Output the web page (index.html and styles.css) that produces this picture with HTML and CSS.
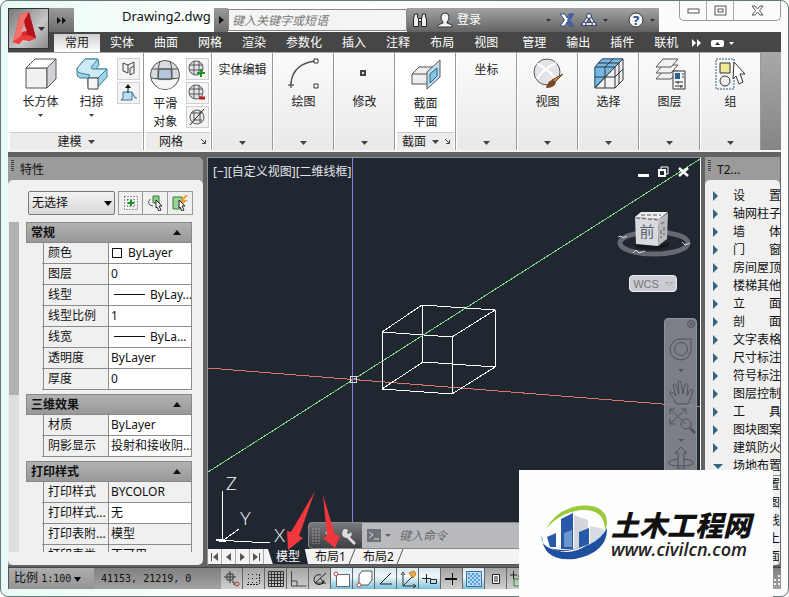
FILE: index.html
```html
<!DOCTYPE html>
<html lang="zh-CN">
    <head>
        <meta charset="utf-8">
        <title>Drawing2.dwg</title>
        <link rel="stylesheet" href="styles.css">
    </head>
    <body>
        <div id="window">
            <header id="header">
                <button class="app-button" aria-label="应用程序菜单">
                    <svg width="39" height="39" viewBox="0 0 39 39">
                        <path d="M4 33 L11 5 L20 3 L27 29 L20 32 L18 27 L12 28 L10 35 Z" fill="#d5282c"/>
                        <path d="M11 5 L20 3 L16 14 L10 35 L4 33 Z" fill="#f0706c"/>
                        <path d="M20 3 L27 29 L20 32 L15 12 Z" fill="#b3141b"/>
                        <path d="M15 15 L18 22 L12 23 Z" fill="#d9a9a9"/>
                        <path d="M4 33 L12 27 L19 26 L27 29 L20 32 L14 31 L10 35 Z" fill="#ee3b3c"/>
                        <path d="M29 18h7l-3.500 4z" fill="#333"/>
                    </svg>
                </button>
                <div class="titlebar">
                    <button class="quick-more" aria-label="快速访问">
                        <svg width="9" height="7"><path d="M0 0l4 3.500-4 3.500zM5 0l4 3.500-4 3.500z" fill="#111"/></svg>
                    </button>
                    <h1>Drawing2.dwg</h1>
                    <button class="search-toggle" aria-label="展开搜索">
                        <svg width="5" height="8"><path d="M0 0l5 4-5 4z" fill="#111"/></svg>
                    </button>
                    <input class="search" type="text" placeholder="键入关键字或短语" aria-label="搜索">
                    <div class="info-center">
                        <button aria-label="查找">
                            <svg width="16" height="16" viewBox="0 0 16 16" fill="#eee" stroke="#222">
                                <path d="M2.500 2h3v3l1 2v7.500h-5V7z"/><path d="M10.500 2h3v3l1 2v7.500h-5V7z"/><path d="M6.500 6.500h3v3h-3z"/>
                            </svg>
                        </button>
                        <button class="login">
                            <svg width="16" height="16" viewBox="0 0 16 16" fill="#f4f4f4" stroke="#333">
                                <path d="M8 1q4 0 4 4 0 3-2 5v1l5 2v2H1v-2l5-2v-1Q4 8 4 5q0-4 4-4z"/>
                            </svg>
                            登录
                        </button>
                        <span class="spacer"></span>
                        <svg class="drop" width="5" height="3"><path d="M0 0h5l-2.500 3z" fill="#333"/></svg>
                        <button class="exchange" aria-label="Exchange">
                            <svg width="16" height="14" viewBox="0 0 16 14">
                                <path d="M1 1h5l2 4 2-4h5l-4.500 6 4.500 6h-5l-2-4-2 4H1l4.500-6z" fill="#fff" stroke="#2f4a82"/>
                                <path d="M10 1h5l-4.500 6 4.500 6h-5L8 8z" fill="#3f64ac"/>
                            </svg>
                        </button>
                        <button aria-label="保持连接">
                            <svg width="16" height="14" viewBox="0 0 16 14" fill="none">
                                <path d="M8 3L3 11h10z" stroke="#29375a" stroke-width="3.500"/>
                                <path d="M8 3L3 11h10z" stroke="#dce3ef" stroke-width="2"/>
                                <circle cx="8" cy="3" r="2.500" fill="#eef" stroke="#29375a"/><circle cx="3" cy="11" r="2" fill="#eef" stroke="#29375a"/><circle cx="13" cy="11" r="2" fill="#eef" stroke="#29375a"/>
                            </svg>
                        </button>
                        <svg class="drop" width="5" height="3"><path d="M0 0h5l-2.500 3z" fill="#333"/></svg>
                        <button class="help" aria-label="帮助">
                            <svg width="16" height="16"><circle cx="8" cy="8" r="7" fill="#f2f5fa" stroke="#333"/><text x="8" y="13" text-anchor="middle" font-size="13" font-weight="bold" fill="#26457e">?</text></svg>
                        </button>
                        <svg class="drop" width="5" height="3"><path d="M0 0h5l-2.500 3z" fill="#333"/></svg>
                    </div>
                    <div class="window-buttons">
                        <button aria-label="最小化"><svg width="13" height="6"><rect x="1" y="1" width="11" height="4" fill="#fff" stroke="#555"/></svg></button>
                        <button aria-label="最大化"><svg width="13" height="11" fill="#fff" stroke="#555"><rect x="1" y="1" width="11" height="9"/><rect x="4" y="4" width="5" height="3"/></svg></button>
                        <button class="close" aria-label="关闭"><svg width="13" height="11"><path d="M1 1h3l2.500 3L9 1h3L8.500 5.500 12 10H9L6.500 7 4 10H1l3.500-4.500z" fill="#fff" stroke="#555"/></svg></button>
                    </div>
                </div>
                <nav class="tabs">
                    <div class="tab-group">
                        <a href="#" class="active">常用</a><a href="#">实体</a><a href="#">曲面</a><a href="#">网格</a><a href="#">渲染</a><a href="#">参数化</a><a href="#">插入</a><a href="#">注释</a><a href="#">布局</a><a href="#">视图</a>
                    </div>
                    <div class="tab-group">
                        <a href="#">管理</a><a href="#">输出</a><a href="#">插件</a><a href="#">联机</a>
                    </div>
                    <button class="tabs-more" aria-label="更多选项卡">
                        <svg width="42" height="9"><path d="M0 0l4 4-4 4zM5 0l4 4-4 4z" fill="#fff"/><rect x="19" y="1" width="13" height="7" rx="2" fill="#fff"/><path d="M23 6h5l-2.500-3z" fill="#333"/><path d="M37 3h5l-2.500 3z" fill="#fff"/></svg>
                    </button>
                </nav>
            </header>

            <section id="ribbon">
                <div class="panel modeling">
                    <div class="tools">
                        <button class="tool">
                            <svg width="32" height="32" viewBox="0 0 32 32" stroke="#555" stroke-linejoin="round">
                                <path d="M1 10h21v20H1z" fill="#f1f1f3"/><path d="M1 10l9-9h21l-9 9z" fill="#fff"/><path d="M22 10l9-9v20l-9 9z" fill="#cfd1d6"/>
                            </svg>
                            长方体
                            <svg width="5" height="3"><path d="M0 0h5l-2.500 3z" fill="#444"/></svg>
                        </button>
                        <button class="tool">
                            <svg width="32" height="32" viewBox="0 0 32 32" stroke="#3f7f99" stroke-linejoin="round">
                                <path d="M1 12q0-2 2-4l6-7h13l1 6-3 4h11v8l-9 10H12v-9L4 20q-3-1-3-4z" fill="#9fd4e8"/>
                                <path d="M1 12q0-2 2-4l6-7h13l-6 7q-2 3 1 3h14l-9 9H12l2-3-10-2q-3-1-3-3z" fill="#cdeaf5"/>
                                <path d="M12 20h10v11H12z" fill="#f6f6f8" stroke="#444"/>
                            </svg>
                            扫掠
                            <svg width="5" height="3"><path d="M0 0h5l-2.500 3z" fill="#444"/></svg>
                        </button>
                        <div class="small-tools">
                            <button aria-label="多段体"><svg width="16" height="18" fill="#eee" stroke="#444"><path d="M2 3l5 2v8l-5-2zM7 5l6-3v11l-4 2V8l4-2"/></svg></button>
                            <button aria-label="按住并拖动"><svg width="18" height="18"><path d="M3 8h9v8H1l2-2zM12 8l3 6h2" fill="#b9dfee" stroke="#3e7288"/><path d="M8 9V3" stroke="#111"/><path d="M5 4h6L8 0z" fill="#111"/></svg></button>
                        </div>
                    </div>
                    <button class="caption">建模 <svg width="7" height="4"><path d="M0 0h7L3.500 4z" fill="#444"/></svg></button>
                </div>
                <div class="panel mesh">
                    <div class="tools">
                        <button class="tool">
                            <svg width="32" height="32" viewBox="0 0 32 32" fill="none" stroke="#555">
                                <circle cx="16" cy="16" r="14.500" fill="#d9dbe0"/>
                                <path d="M3 20q13 3 26 0-4 10-13 10T3 20z" fill="#f6f6f8" stroke="none"/>
                                <path d="M10 10h12l1 10H9z" fill="#b4c6dc"/><path d="M3 10h26M2 19q14 3 28 0M11 2Q8 10 9 20M21 2q3 8 2 18"/>
                            </svg>
                            平滑<br>对象
                        </button>
                        <div class="small-tools">
                            <button aria-label="提高平滑度"><svg width="18" height="18" fill="none" stroke="#555"><circle cx="8" cy="8" r="7" fill="#e4e6ea"/><path d="M1 5h14M1 10h14M6 1v14M11 1v12"/><path d="M13 9v8M9 13h8" stroke="#149a24" stroke-width="2"/></svg></button>
                            <button aria-label="降低平滑度"><svg width="18" height="18" fill="none" stroke="#555"><circle cx="8" cy="8" r="7" fill="#e4e6ea"/><path d="M1 5h14M1 10h14M6 1v14M11 1v12"/><path d="M11 14h6" stroke="#b3201c" stroke-width="3"/></svg></button>
                            <button aria-label="优化网格"><svg width="18" height="18" fill="none" stroke="#555"><circle cx="9" cy="9" r="7" fill="#e9eaee"/><path d="M3 5h11M5 12h9M6 3v9M12 3v12"/><path d="M2 17L16 1" stroke="#222"/></svg></button>
                        </div>
                    </div>
                    <button class="caption launcher">网格 <svg width="5" height="5"><path d="M0 0l4 4M4.500 1v3.500H1" stroke="#444" fill="none"/></svg></button>
                </div>
                <button class="panel folded text-only">实体编辑<svg class="arrow" width="7" height="4"><path d="M0 0h7L3.500 4z"/></svg></button>
                <button class="panel folded">
                    <svg width="32" height="32" viewBox="0 0 32 32" fill="none" stroke="#555">
                        <path d="M3 25Q5 6 27 3" stroke-width="1.500"/><path d="M0 27h6M3 24v6" stroke="#222"/><path d="M26 1h4v4h-4zM26 26h4v4h-4z" fill="#fff" stroke="#333"/>
                    </svg>
                    绘图<svg class="arrow" width="7" height="4"><path d="M0 0h7L3.500 4z"/></svg>
                </button>
                <button class="panel folded">
                    <svg width="32" height="32"><rect x="12" y="13" width="4" height="4" fill="#ddd" stroke="#444" stroke-width="2"/></svg>
                    修改<svg class="arrow" width="7" height="4"><path d="M0 0h7L3.500 4z"/></svg>
                </button>
                <div class="panel section">
                    <div class="tools">
                        <button class="tool">
                            <svg width="32" height="32" viewBox="0 0 32 32" stroke="#555" stroke-linejoin="round">
                                <path d="M2 15l7-7h19v9l-8 8H2z" fill="#eceef0"/><path d="M2 15h16v10" fill="none"/>
                                <path d="M17 13L30 1v17L17 30z" fill="#c3dcec"/><path d="M20 15l7-6v8l-7 7z" fill="#8cc4e6" stroke="#236590"/>
                            </svg>
                            截面<br>平面
                        </button>
                    </div>
                    <button class="caption launcher">截面 <svg width="7" height="4"><path d="M0 0h7L3.500 4z" fill="#444"/></svg><svg width="5" height="5"><path d="M0 0l4 4M4.500 1v3.500H1" stroke="#444" fill="none"/></svg></button>
                </div>
                <button class="panel folded text-only">坐标<svg class="arrow" width="7" height="4"><path d="M0 0h7L3.500 4z"/></svg></button>
                <button class="panel folded">
                    <svg width="32" height="32" viewBox="0 0 32 32">
                        <circle cx="15" cy="14" r="13" fill="#e4e4e8" stroke="#555"/><path d="M5 6q12 5 20 17M24 5Q12 10 5 21" fill="none" stroke="#fff" stroke-width="2"/>
                        <path d="M31 16l-8 8-3-2z" fill="#c98b52" stroke="#6b3d1c"/><path d="M14 30q2-8 7-8l3 3q-2 5-10 5z" fill="#7a4726"/>
                    </svg>
                    视图<svg class="arrow" width="7" height="4"><path d="M0 0h7L3.500 4z"/></svg>
                </button>
                <button class="panel folded">
                    <svg width="32" height="32" viewBox="0 0 32 32" fill="none" stroke="#333">
                        <path d="M2 9l7-8h21v21l-8 8H2z" fill="#f2f3f5"/><path d="M2 9l7-8h21l-8 8L2 29z" fill="#77b9e4" stroke="#2d6790"/>
                        <path d="M2 9h20v21M22 9l8-8M12 9v21M2 19h20l8-8M12 9l8-8M5 5h21v21M2 30L22 9"/>
                    </svg>
                    选择<svg class="arrow" width="7" height="4"><path d="M0 0h7L3.500 4z"/></svg>
                </button>
                <button class="panel folded">
                    <svg width="32" height="32" viewBox="0 0 32 32" fill="#f3f3f5" stroke="#555" stroke-linejoin="round">
                        <path d="M2 21l7-8h15l-7 8z"/><path d="M2 15l7-8h15l-7 8z"/><path d="M2 9l7-8h15l-7 8z"/>
                        <path d="M19 13h12v18H19z" stroke="#333"/><path d="M21 15h5v6h-5z" fill="#26648f" stroke="none"/><path d="M28 16h2M28 19h2M21 24h8M21 28h8M24 23v3M27 27v3" stroke="#333"/>
                    </svg>
                    图层<svg class="arrow" width="7" height="4"><path d="M0 0h7L3.500 4z"/></svg>
                </button>
                <button class="panel folded">
                    <svg width="32" height="32" viewBox="0 0 32 32" stroke="#333">
                        <path d="M1 1h18v30H1z" fill="none" stroke="#345d80" stroke-dasharray="2 1"/><path d="M5 5h10v10H5z" fill="#f0ea97"/><circle cx="10" cy="23" r="5" fill="#eee"/>
                        <path d="M19 4l11 12h-5l3 8-4 2-3-8-3 3z" fill="#fff"/>
                    </svg>
                    组<svg class="arrow" width="7" height="4"><path d="M0 0h7L3.500 4z"/></svg>
                </button>
            </section>

            <main id="workspace">
                <aside class="palette properties">
                    <h2>特性</h2>
                    <div class="palette-body">
                        <div class="selection">
                            <div class="picker">
                                <select aria-label="选择对象"><option>无选择</option></select>
                                <svg width="8" height="5"><path d="M0 0h8L4 5z"/></svg>
                            </div>
                            <button aria-label="切换 PICKADD"><svg width="16" height="16"><path d="M1.500 1.500h13v13h-13zM4.500 4.500h7v7h-7z" fill="none" stroke="#444" stroke-dasharray="1 2"/><path d="M8 5v6M5 8h6" stroke="#149a24" stroke-width="2"/></svg></button>
                            <button aria-label="选择对象"><svg width="16" height="16"><path d="M6 1h6v7H6z" fill="#8bcf8b" stroke="#367a3a"/><path d="M3 4q-4 6 3 7" fill="none" stroke="#555"/><path d="M9 5l6 6h-3l2 4-2 1-2-4-1 1z" fill="#fff" stroke="#222"/></svg></button>
                            <button aria-label="快速选择"><svg width="16" height="16"><path d="M1 2h9v12H1z" fill="#9bd49b" stroke="#367a3a"/><path d="M15 0l-6 6h4l-4 3" fill="none" stroke="#e8a22c" stroke-width="2"/><path d="M7 5l6 6h-3l2 4-2 1-2-4-1 1z" fill="#fff" stroke="#222"/></svg></button>
                        </div>
                        <div class="property-list">
                            <div class="scrollbar"></div>
                            <div class="groups">
                                <table>
                                    <thead><tr><th colspan="2">常规</th></tr></thead>
                                    <tbody>
                                        <tr><td>颜色</td><td><i class="swatch"></i>ByLayer</td></tr>
                                        <tr><td>图层</td><td>0</td></tr>
                                        <tr><td>线型</td><td><i class="line"></i>ByLay...</td></tr>
                                        <tr><td>线型比例</td><td>1</td></tr>
                                        <tr><td>线宽</td><td><i class="line"></i>ByLa...</td></tr>
                                        <tr><td>透明度</td><td>ByLayer</td></tr>
                                        <tr><td>厚度</td><td>0</td></tr>
                                    </tbody>
                                </table>
                                <table>
                                    <thead><tr><th colspan="2">三维效果</th></tr></thead>
                                    <tbody>
                                        <tr><td>材质</td><td>ByLayer</td></tr>
                                        <tr><td>阴影显示</td><td>投射和接收阴...</td></tr>
                                    </tbody>
                                </table>
                                <table>
                                    <thead><tr><th colspan="2">打印样式</th></tr></thead>
                                    <tbody>
                                        <tr><td>打印样式</td><td class="locked">BYCOLOR</td></tr>
                                        <tr><td>打印样式...</td><td>无</td></tr>
                                        <tr><td>打印表附...</td><td class="locked">模型</td></tr>
                                        <tr><td>打印表类...</td><td class="locked">不可用</td></tr>
                                    </tbody>
                                </table>
                            </div>
                        </div>
                    </div>
                </aside>

                <section class="drawing">
                    <div class="canvas">
                        <svg class="scene" width="100%" height="100%" fill="none" shape-rendering="crispEdges">
                            <path d="M0 314L492 1" stroke="#7ddc86"/>
                            <path d="M0 210L492 249" stroke="#d9746e"/>
                            <path d="M144.500 0v2000" stroke="#7f80dc"/>
                            <rect x="142" y="218" width="6" height="6" stroke="#ddd"/>
                            <path d="M174 174L214 147 287 152 244 179zM174 231L215 204 287 209 244 236zM174 174v57M214 147v57M287 152v57M244 179v57" stroke="#fff"/>
                            <path d="M14.500 333v49M8 382l54 3M8 382l9-1 14-10M8 382l6 2 8-2" stroke="#fff"/>
                            <g class="axis-names"><text x="18" y="332">Z</text><text x="32" y="367">Y</text><text x="66" y="384">X</text></g>
                        </svg>
                        <div class="view-label">[−][自定义视图][二维线框]</div>
                        <div class="view-buttons">
                            <button aria-label="最小化视口"><svg width="11" height="11"><path d="M0 8h11v3H0z" fill="#fff"/></svg></button>
                            <button aria-label="还原视口"><svg width="11" height="11" fill="none" stroke="#fff"><path d="M3 3V1h7v7H8"/><path d="M1 4h6v6H1z" stroke-width="2"/></svg></button>
                            <button aria-label="关闭视口"><svg width="11" height="11"><path d="M1 2l9 8M10 2l-9 8" stroke="#fff" stroke-width="2.500"/></svg></button>
                        </div>
                        <div class="view-cube">
                            <svg width="76" height="48" viewBox="0 0 76 48">
                                <ellipse cx="38" cy="33" rx="34" ry="11" fill="none" stroke="#66696f" stroke-width="5"/>
                                <path d="M20 35q16 6 33-1" stroke="#15191e" stroke-width="4" fill="none"/>
                                <path d="M19 7l24 2-1 27-22-2z" fill="#d9dadd"/><path d="M43 9l9-6-1 26-9 7z" fill="#b9babd"/><path d="M19 7l6-5h27l-9 7z" fill="#ededee"/>
                                <path d="M25 5h20M45 14l5-3M45 20v8M48 17v8M20 8l23 2" stroke="#57595d" stroke-dasharray="4 2"/>
                                <text x="31" y="27" text-anchor="middle" font-size="15" fill="#596073">前</text>
                                <path d="M2 27l3-1 2 2 4-2M17 43l3-3 3 3 6-2M66 32l3 3 5-2" stroke="#d8d8da" fill="none"/>
                            </svg>
                        </div>
                        <button class="wcs">WCS <svg width="8" height="4"><path d="M0 .500h8L4 4z" fill="none" stroke="#aaa"/></svg></button>
                        <div class="nav-bar">
                            <svg width="32" height="150" viewBox="0 0 32 150" fill="none" stroke="#555860">
                                <circle cx="26" cy="5" r="3.500"/><path d="M24 3l4 4M28 3l-4 4"/>
                                <path d="M16 20h10v10a10.500 10.500 0 1 1-10-10z"/><circle cx="16" cy="30" r="6.500"/>
                                <path d="M13 50h6l-3 3zM13 120h6l-3 3z" fill="#555860" stroke="none"/>
                                <path d="M11 85q-2-6-6-10-1-3 2-2l4 4-3-11q1-2 3 0l3 9-1-12q2-2 3 0l2 12 2-10q2-1 3 1l-1 11 3-6q2-1 3 0-2 8-5 14z"/>
                                <path d="M5 90l16 15M21 90L5 105M5 95v-5h5M16 90h5v5M5 100v5h5"/><circle cx="21" cy="105" r="5"/><path d="M25 109l5 5" stroke-width="2.500"/>
                                <path d="M13 150v-16h-3l6-6 6 6h-3v16zM13 140q-9 1-9 4t12 3 12-3-9-4"/>
                            </svg>
                        </div>
                        <div class="command-line">
                            <div class="handle">
                                <svg width="46" height="18" viewBox="0 0 46 18"><path d="M2 1v16M5 1v16M8 1v16" stroke="#999" stroke-dasharray="2 1"/><path d="M15 5l6 7M21 5l-6 7" stroke="#ccc" stroke-width="2"/><path d="M32 3q2-2 5 0l-1 3 2 1 2-2q2 3-1 5l6 6-2 2-7-7q-4 0-5-4z" fill="#ddd"/></svg>
                            </div>
                            <svg width="26" height="14"><rect width="14" height="13" fill="#6e7178"/><path d="M2 3l4 3-4 3M7 10h5" fill="none" stroke="#ddd"/><path d="M18 5h6l-3 3z" fill="#666"/></svg>
                            <input type="text" placeholder="键入命令" aria-label="命令">
                        </div>
                    </div>
                    <div class="layout-tabs">
                        <div class="pager">
                            <button aria-label="第一个"><svg width="9" height="8"><path d="M1.500 0v8" stroke="#555"/><path d="M8 0v8L3 4z" fill="#555"/></svg></button><button aria-label="上一个"><svg width="7" height="8"><path d="M6 0v8L1 4z" fill="#555"/></svg></button><button aria-label="下一个"><svg width="7" height="8"><path d="M1 0v8l5-4z" fill="#555"/></svg></button><button aria-label="最后一个"><svg width="9" height="8"><path d="M7.500 0v8" stroke="#555"/><path d="M1 0v8l5-4z" fill="#555"/></svg></button>
                        </div>
                        <a href="#" class="current">模型</a><a href="#">布局1</a><svg width="8" height="15"><path d="M7 0L1 15" stroke="#555"/></svg><a href="#">布局2</a><svg width="8" height="15"><path d="M7 0L1 15" stroke="#555"/></svg>
                    </div>
                    <svg class="pointers" width="60" height="62" viewBox="0 0 60 62" fill="#f0373b">
                        <path d="M28 3L12 48l4 2L1 62 0 43l4 1z"/><path d="M36 7l12 40 5 1-5 12-12-10 4-2z"/>
                    </svg>
                </section>

                <aside class="palette tree">
                    <h2>T2...</h2>
                    <div class="palette-body">
                        <ul>
                            <li><button>设　　置</button></li>
                            <li><button>轴网柱子</button></li>
                            <li><button>墙　　体</button></li>
                            <li><button>门　　窗</button></li>
                            <li><button>房间屋顶</button></li>
                            <li><button>楼梯其他</button></li>
                            <li><button>立　　面</button></li>
                            <li><button>剖　　面</button></li>
                            <li><button>文字表格</button></li>
                            <li><button>尺寸标注</button></li>
                            <li><button>符号标注</button></li>
                            <li><button>图层控制</button></li>
                            <li><button>工　　具</button></li>
                            <li><button>图块图案</button></li>
                            <li><button>建筑防火</button></li>
                            <li class="open"><button>场地布置</button></li>
                        </ul>
                        <ul class="sub">
                            <li>置</li><li>图</li><li>线</li><li>上</li><li>面</li>
                        </ul>
                    </div>
                </aside>
            </main>

            <footer id="status">
                <button class="scale">比例 <span>1:100</span> <svg width="7" height="5"><path d="M0 0h7L3.500 5z"/></svg></button>
                <output class="coords">41153, 21219, 0</output>
                <div class="toggles">
                    <button aria-label="推断约束"><svg width="18" height="18" fill="none" stroke="#333"><path d="M1 7h12M7 1v12M4 4h6v6H4z"/><circle cx="14" cy="14" r="2" stroke="#a33"/><path d="M9 12h2v3"/></svg></button>
                    <button aria-label="捕捉模式"><svg width="18" height="18" stroke="#222"><path d="M3 4.500h10M3 8.500h10M3 12.500h10" stroke-dasharray="1 3"/><path d="M14.500 4v10M2 14.500h12" stroke-dasharray="2 1"/></svg></button>
                    <button aria-label="栅格显示"><svg width="18" height="18" fill="none" stroke="#333"><path d="M1.500 1.500h15v15h-15zM4.500 1v16M7.500 1v16M10.500 1v16M13.500 1v16M1 4.500h16M1 7.500h16M1 10.500h16M1 13.500h16"/></svg></button>
                    <button aria-label="正交模式"><svg width="18" height="18" fill="none" stroke="#444"><path d="M2.500 1v15h15M3 11h5v5"/></svg></button>
                    <button aria-label="极轴追踪"><svg width="18" height="18" fill="none" stroke="#222"><path d="M15 3L4 13h11M13 10a5 5 0 1 1-3-5M9 8q3 2 3 6"/></svg></button>
                    <button class="on" aria-label="对象捕捉"><svg width="18" height="18" fill="#fff" stroke="#666"><path d="M3.500 4.500h13v12h-13z"/><circle cx="3" cy="4" r="2" stroke="#b44"/></svg></button>
                    <button class="on" aria-label="三维对象捕捉"><svg width="18" height="18" fill="#fff" stroke="#555"><path d="M4 5l3-4h10v9l-4 5H4z"/><circle cx="4" cy="15" r="2" stroke="#b44"/></svg></button>
                    <button class="on" aria-label="对象捕捉追踪"><svg width="18" height="18" fill="none" stroke="#222"><path d="M14 3L3 14h12"/></svg></button>
                    <button class="on" aria-label="动态 UCS"><svg width="18" height="18" fill="none" stroke="#333"><path d="M4 16V4M4 16h12M4 16L15 5M2 5l2-3 2 3M14 14l3 2-3 2"/><path d="M10 3l5-2 2 3-3 4z" fill="#f0aa42" stroke="#b67820"/></svg></button>
                    <button class="on" aria-label="动态输入"><svg width="18" height="18" fill="none" stroke="#222"><path d="M1 8.500h9M5.500 4v9"/><path d="M9.500 9.500h6v4h-6z"/></svg></button>
                    <button aria-label="线宽"><svg width="18" height="18" fill="none" stroke="#111"><path d="M2 9h12" stroke-width="2"/><path d="M9.500 3v12"/></svg></button>
                    <button class="on" aria-label="透明度"><svg width="18" height="18"><path d="M1.500 1.500h15v15h-15z" fill="#b7dbf4" stroke="#3b709e"/><path d="M3 4h12M3 8h12M3 12h12" stroke="#5c9fd4" stroke-width="2" stroke-dasharray="2 2"/><path d="M5 6h10M5 10h10M5 14h10" stroke="#5c9fd4" stroke-width="2" stroke-dasharray="2 2"/></svg></button>
                    <button aria-label="快捷特性"><svg width="18" height="18" fill="#fff" stroke="#222"><path d="M5.500 4.500h7v9h-7z"/><path d="M7 7h4M7 9h4M7 11h4"/></svg></button>
                    <button aria-label="选择循环"><svg width="18" height="18" fill="none" stroke="#222"><path d="M1 5h7M4.500 1v8M9 6h7v7"/><path d="M5 9h7v7H5z" stroke="#2b8a35"/></svg></button>
                </div>
                <svg class="grip" width="8" height="12"><path d="M5 1h3M5 5h3M1 5h3M1 9h3M5 9h3" stroke="#eee" stroke-width="2" stroke-dasharray="2 2"/></svg>
            </footer>
        </div>

        <div class="sponsor">
            <svg width="68" height="58" viewBox="0 0 68 58">
                <path d="M5 24Q14 6 36 1 66-2 66 18q0 4-2 7 0-21-24-20Q18 8 5 24z" fill="#9bcb3c"/>
                <path d="M33 10l14 5v28H33z" fill="#d3d6dc"/><path d="M49 21l14 3v6L49 40z" fill="#d8dbe1"/><path d="M6 32l9-4v14H9z" fill="#2858a8"/>
                <path d="M20 14l12-6v36H20z" fill="#2858a8"/><path d="M23 28l8-3v17h-8z" fill="#6d95cf"/>
                <path d="M38 27l10-4v16l-10 4z" fill="#2858a8"/>
                <path d="M1 30q-3 14 20 15 34-1 45-22 1 24-32 31Q1 57 1 30z" fill="#204fa0"/><path d="M4 40q14 12 42 0-20 14-42 0z" fill="#fefefe"/>
            </svg>
            <div>
                <strong>土木工程网</strong>
                <a href="#">www.civilcn.com</a>
            </div>
        </div>
    </body>
</html>
```
FILE: styles.css
```css
:root {
    --dark: #464646;
    --frame: #636363;
    --line: #8c8c8c;
    --canvas: #212730;
    --face: #f0f0f0;
}
* {
    box-sizing: border-box;
}
body {
    margin: 0;
    background: white;
    font: 12px/18px "Noto Sans", "Noto Sans CJK SC", sans-serif;
    color: #111;
}
button, input, select {
    font: inherit;
    color: inherit;
    margin: 0;
    padding: 0;
    border: 0;
    border-radius: 0;
    background: none;
}
a {
    color: inherit;
    text-decoration: none;
}
h1, h2, ul {
    margin: 0;
    padding: 0;
    font-weight: normal;
}
ul {
    list-style: none;
}
svg {
    flex-shrink: 0;
}
#window {
    display: flex;
    flex-direction: column;
    height: 100vh;
    padding: 0 7px 7px;
    border: 1px solid #66777a;
    border-radius: 8px;
    background: linear-gradient(90deg, #e9fbf6, #fdfefe 30%, #fafcfc);
    overflow: hidden;
}

/* title bar and tabs */
#header {
    display: grid;
    grid-template-columns: 41px 1fr;
    grid-template-rows: 31px 20px;
    background: linear-gradient(transparent 31px, var(--dark) 31px);
}
.app-button {
    grid-row: 1 / 3;
    height: 41px;
    margin-top: 7px;
    border: 1px solid #333;
    background: linear-gradient(135deg, #777, #c6c6c6 60%, #8b8b8b);
}
.app-button svg {
    display: block;
}
.titlebar {
    display: flex;
    align-items: flex-end;
    min-width: 0;
}
.quick-more, .search-toggle {
    width: 25px;
    height: 24px;
    background: linear-gradient(#9a9a9a, #6c6c6c);
}
.search-toggle {
    width: 14px;
}
.titlebar h1 {
    width: 140px;
    padding-left: 48px;
    height: 26px;
    font-size: 13px;
    line-height: 20px;
}
.search {
    width: 179px;
    height: 22px;
    margin-bottom: 1px;
    padding: 0 3px;
    border: 1px solid #888;
    background: #f4f4f4;
}
.search::placeholder {
    color: #777;
    font-style: italic;
}
.info-center {
    display: flex;
    align-items: center;
    flex: 0 1 252px;
    height: 24px;
    gap: 6px;
    padding: 0 4px 0 5px;
    color: white;
    background: linear-gradient(#a3a3a3, #636363);
}
.info-center button {
    display: flex;
    align-items: center;
    gap: 4px;
}
.info-center .login {
    margin-left: 3px;
}
.info-center .exchange {
    margin-left: 2px;
}
.info-center .help {
    margin-left: 14px;
}
.spacer {
    flex: 1;
}
.window-buttons {
    display: flex;
    align-self: flex-start;
    margin-left: auto;
    border: 1px solid #999;
    border-top: 0;
    border-radius: 0 0 5px 5px;
}
.window-buttons button {
    display: flex;
    align-items: center;
    justify-content: center;
    width: 27px;
    height: 19px;
    border-right: 1px solid #aaa;
}
.window-buttons .close {
    width: 46px;
    border: 0;
}
.tabs {
    display: flex;
    align-items: flex-end;
    padding-left: 5px;
    color: white;
    background: var(--dark);
}
.tab-group {
    display: flex;
    margin-right: 4px;
}
.tab-group a {
    padding: 0 10px;
    line-height: 18px;
    height: 18px;
}
.tab-group .active {
    color: #222;
    padding: 0 11px;
    background: linear-gradient(#cfcfcf, white);
}
.tabs-more {
    display: flex;
    align-items: center;
    height: 18px;
}

/* ribbon */
#ribbon {
    display: flex;
    height: 100px;
    padding-top: 1px;
    border-bottom: 2px solid #f4f4f4;
    background: linear-gradient(#a8a8a8, #858585);
    color: #222;
}
.panel {
    display: flex;
    flex-direction: column;
    flex: 0 0 61px;
    border-left: 1px solid white;
    border-right: 1px solid #999;
    background: white;
}
.panel.modeling {
    flex-basis: 136px;
}
.panel.mesh {
    flex-basis: 68px;
}
.tools {
    display: flex;
    flex: 1;
    justify-content: space-evenly;
    padding-top: 5px;
}
.modeling .tools {
    justify-content: flex-start;
    padding-left: 6px;
}
.tool {
    display: flex;
    flex-direction: column;
    align-items: center;
    min-width: 36px;
    gap: 3px;
    line-height: 18px;
}
.modeling .tool {
    width: 51px;
}
.mesh .tool, .section .tool {
    display: block;
}
.tool svg {
    display: block;
    margin: 0 auto;
}
.mesh .tool svg, .section .tool svg {
    margin-bottom: 4px;
}
.small-tools {
    display: flex;
    flex-direction: column;
    gap: 2px;
}
.small-tools button {
    display: flex;
    align-items: center;
    justify-content: center;
    width: 23px;
    height: 22px;
    border: 1px solid #d0d0d0;
    background: #f4f4f4;
}
.caption {
    display: flex;
    align-items: center;
    justify-content: center;
    gap: 6px;
    height: 18px;
    margin: 0 1px;
    border-top: 1px solid #ccc;
    background: #ececec;
}
.caption.launcher {
    justify-content: flex-end;
    padding-right: 4px;
}
.mesh .launcher {
    gap: 18px;
}
.folded {
    align-items: center;
    padding: 5px 0 4px;
    background: linear-gradient(#fbfbfb, #e9e9e9);
}
.folded svg {
    margin-bottom: 3px;
}
.folded .arrow {
    margin: auto 0 1px;
    fill: #444;
}
.text-only {
    padding-top: 8px;
}

/* palettes and drawing */
#workspace {
    display: flex;
    flex: 1;
    min-height: 0;
    gap: 4px;
    padding: 5px 0 2px;
    background: var(--frame);
}
.palette {
    display: flex;
    flex-direction: column;
    flex: 0 0 195px;
    min-height: 0;
    border-radius: 0 5px 5px 0;
    background: #9b9b9b;
    overflow: hidden;
}
.palette h2 {
    position: relative;
    padding-left: 12px;
    height: 23px;
    font-size: 12px;
    line-height: 25px;
}
.palette h2::before {
    content: "";
    position: absolute;
    left: 3px;
    top: 3px;
    width: 3px;
    height: 12px;
    background: repeating-linear-gradient(#444 0 1px, transparent 1px 2px);
}
.palette-body {
    display: flex;
    flex-direction: column;
    flex: 1;
    min-height: 0;
    border-radius: 5px;
    background: var(--face);
}
.selection {
    display: flex;
    padding: 11px 10px 7px 20px;
}
.picker {
    position: relative;
    flex: 1;
    margin-right: 3px;
}
.picker select {
    appearance: none;
    width: 100%;
    height: 24px;
    padding-left: 3px;
    border: 1px solid #777;
    border-radius: 2px;
    background: linear-gradient(#f2f2f2, #d9d9d9);
}
.picker svg {
    position: absolute;
    right: 3px;
    top: 10px;
}
.selection button {
    display: flex;
    align-items: center;
    justify-content: center;
    width: 25px;
    height: 24px;
    border: 1px solid #999;
    border-left-width: 0;
}
.picker + button {
    border-left-width: 1px;
}
.property-list {
    display: flex;
    flex: 1;
    min-height: 0;
    margin-bottom: 13px;
    overflow: hidden;
}
.scrollbar {
    width: 10px;
    margin: 0 7px 0 1px;
    background: linear-gradient(#b1b1b1 173px, #dedede 173px);
}
.groups {
    flex: 1;
    margin-right: 11px;
}
.groups table {
    width: 100%;
    margin-bottom: 4px;
    border-collapse: separate;
    border-spacing: 0;
    table-layout: fixed;
}
.groups th {
    position: relative;
    height: 21px;
    padding: 0 4px;
    border: 1px solid #888;
    background: linear-gradient(#b2b2b2, #989898);
    text-align: left;
    line-height: 19px;
}
.groups th::after {
    content: "";
    position: absolute;
    right: 10px;
    top: 7px;
    border: 4px solid transparent;
    border-top: 0;
    border-bottom: 5px solid #111;
}
.groups td {
    height: 21px;
    padding: 0 2px;
    border-bottom: 1px solid var(--line);
    border-right: 1px solid var(--line);
    background: white;
    line-height: 20px;
    white-space: nowrap;
    overflow: hidden;
}
.groups td:first-child {
    padding-left: 22px;
    background: linear-gradient(90deg, var(--face) 17px, var(--line) 17px 18px, var(--face) 18px);
}
.groups tbody td:first-child {
    border-image: linear-gradient(90deg, var(--face) 17px, var(--line) 17px) 1;
}
.groups td.locked {
    background: var(--face);
}
.swatch {
    display: inline-block;
    width: 10px;
    height: 10px;
    margin: 0 6px 0 1px;
    border: 1px solid #111;
    vertical-align: -1px;
}
.line {
    display: inline-block;
    width: 31px;
    height: 1px;
    margin: 0 5px 0 3px;
    background: #111;
    vertical-align: 4px;
}
.drawing {
    position: relative;
    display: flex;
    flex-direction: column;
    flex: 1;
    min-width: 0;
    border: 1px solid #94949c;
    border-right-color: white;
    border-bottom: 0;
}
.canvas {
    position: relative;
    flex: 1;
    min-height: 0;
    background: var(--canvas);
    overflow: hidden;
}
.scene {
    display: block;
    position: absolute;
}
.axis-names {
    font: 300 18px Lato, sans-serif;
    fill: white;
}
.view-label {
    position: absolute;
    left: 5px;
    top: 5px;
    color: #e4e4ea;
}
.view-buttons {
    position: absolute;
    right: 11px;
    top: 8px;
    display: flex;
    gap: 9px;
}
.view-buttons button, .view-buttons svg {
    display: block;
}
.view-cube {
    position: absolute;
    right: 8px;
    top: 52px;
}
.wcs {
    position: absolute;
    right: 23px;
    top: 117px;
    display: flex;
    align-items: center;
    justify-content: center;
    gap: 6px;
    width: 48px;
    height: 17px;
    border: 1px solid #eee;
    border-radius: 4px;
    background: #ccccd4;
    color: #777;
    font: 11px "Liberation Sans", sans-serif;
}
.nav-bar {
    position: absolute;
    right: 3px;
    top: 160px;
    bottom: 0;
    width: 33px;
    border: 1px solid #9c9ea6;
    border-radius: 4px;
    background: #878991;
    opacity: 0.9;
}
.command-line {
    position: absolute;
    left: 100px;
    right: 0;
    bottom: 0;
    display: flex;
    align-items: center;
    gap: 6px;
    height: 27px;
    border: 1px solid #888;
    border-radius: 4px 0 0 4px;
    background: #b9babd;
    overflow: hidden;
}
.handle {
    display: flex;
    align-items: center;
    width: 53px;
    height: 100%;
    padding-left: 2px;
    margin-right: -1px;
    background: linear-gradient(#77797c, #3d3f43);
}
.command-line input {
    flex: 0 1 112px;
    min-width: 0;
}
.command-line input::placeholder {
    color: #66686c;
    font-style: italic;
}
.layout-tabs {
    display: flex;
    height: 16px;
    background: #f3f3f3;
    border-bottom: 1px solid #555;
    line-height: 16px;
}
.pager {
    display: flex;
    margin-right: 4px;
}
.pager button {
    display: flex;
    align-items: center;
    justify-content: center;
    width: 14px;
    border-right: 1px solid #aaa;
}
.layout-tabs a {
    padding: 0 2px 0 7px;
}
.layout-tabs .current {
    padding: 0 8px;
    background: var(--canvas);
    color: white;
    clip-path: polygon(0 0, 92% 0, 100% 100%, 12% 100%);
}
.pointers {
    position: absolute;
    left: 79px;
    bottom: 15px;
}
.tree {
    flex-basis: 76px;
    border-radius: 0;
    border-right: 1px solid #666;
}
.tree .palette-body {
    padding-top: 7px;
}
.tree li {
    height: 18px;
    padding-left: 28px;
    white-space: nowrap;
    position: relative;
}
.tree li button {
    display: block;
}
.tree ul:first-child li::before {
    content: "";
    position: absolute;
    left: 8px;
    top: 4px;
    border: 5px solid transparent;
    border-left-color: #35647c;
    border-right: 0;
}
.tree ul:first-child li.open::before {
    top: 7px;
    border: 5px solid transparent;
    border-top-color: #35647c;
    border-bottom: 0;
}
.tree .sub {
    border-top: 1px solid var(--line);
    text-align: right;
}

/* status bar */
#status {
    display: flex;
    height: 22px;
    align-items: stretch;
    border-top: 1px solid #444;
    background: linear-gradient(#808080, #a2a2a2);
}
.scale {
    width: 86px;
    padding-left: 5px;
    border-left: 1px solid #555;
    text-align: left;
    background: linear-gradient(#adadad, #949494);
}
.scale span, .coords {
    font: 10px/21px "DejaVu Sans Mono", monospace;
}
.coords {
    width: 127px;
    padding-left: 7px;
}
.toggles {
    display: flex;
}
.toggles button {
    display: flex;
    align-items: center;
    justify-content: center;
    width: 22px;
    border-right: 1px solid #666;
    background: linear-gradient(#a5a5a5, #cfcfcf);
}
.toggles .on {
    background: linear-gradient(#d6e8ef, #f1f8fa 40%, #79bfdb);
}
.grip {
    margin: auto 0 2px auto;
}

/* sponsor card over the bottom corner */
.sponsor {
    position: absolute;
    right: 16px;
    bottom: 0;
    display: flex;
    align-items: center;
    gap: 2px;
    width: 254px;
    height: 127px;
    padding-left: 22px;
    background: #fefefe;
}
.sponsor strong {
    display: block;
    font: italic 900 28px/30px "Noto Sans CJK SC", sans-serif;
}
.sponsor a {
    display: block;
    color: #222;
    font: italic 600 18px/20px "Open Sans", sans-serif;
}
```
